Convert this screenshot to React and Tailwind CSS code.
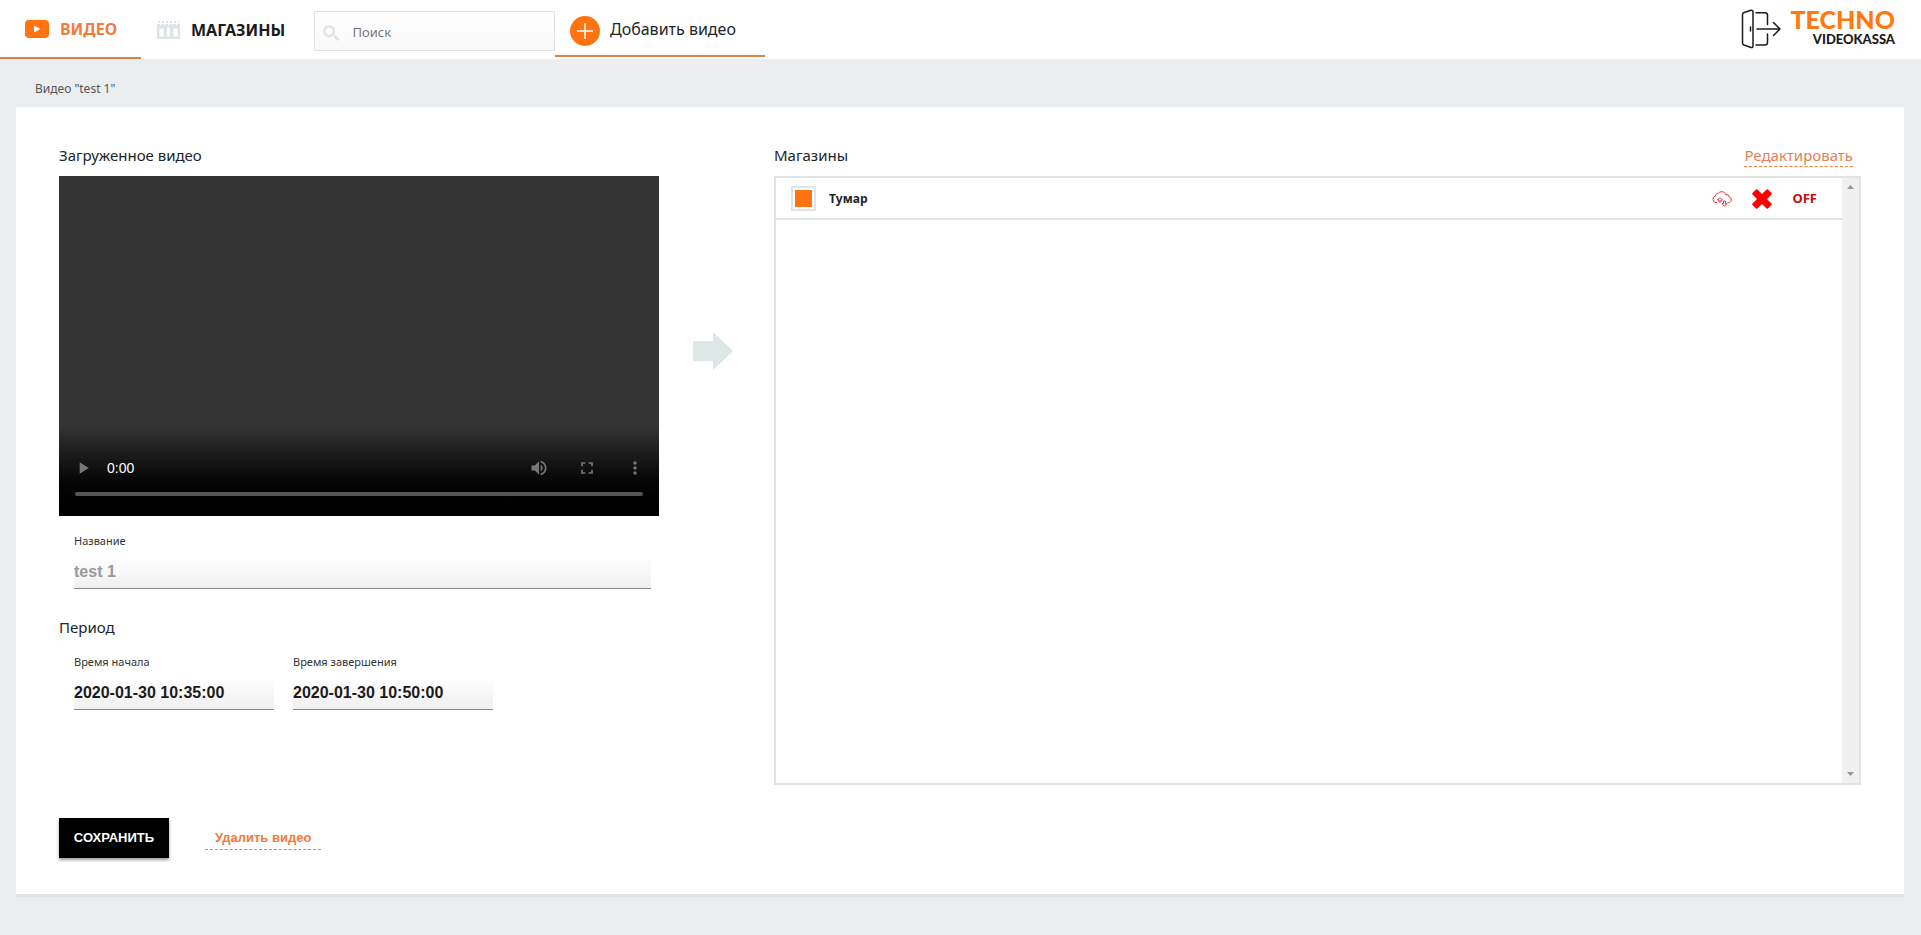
import { MdPlayArrow, MdVolumeUp, MdFullscreen, MdMoreVert } from "react-icons/md";

function ShopIcon() {
  return (
    <svg className="h-[18px] w-[23px]" viewBox="0 0 23 18" fill="none">
      <path d="M0 3h23v15H0z" fill="#dfe4e6" />
      <path d="M2.500 7.500H6.500V15.500H2.500zM10 7.500q0-1 1.500-1t1.500 1V15.500H10zM16.500 7.500H20.500V15.500H16.500z" fill="#fff" />
      <path d="M1 1h21" stroke="#dfe4e6" strokeWidth="2" strokeDasharray="2 2" />
      <path d="M3.500 2.500v2M7.500 2.500v2M11.500 2.500v2M15.500 2.500v2M19.500 2.500v2" stroke="#fff" />
    </svg>
  );
}

function ExitIcon() {
  return (
    <svg className="h-10 w-10" viewBox="0 0 40 40" fill="none" stroke="#1b1b1b" strokeWidth="1.5" strokeLinejoin="round" strokeLinecap="round">
      <path d="M3 3.500L10 1.300q2-.4 2 1.600V37q0 2-2 1.500L3 36q-1.500-.6-1.500-2V5.500Q1.500 4 3 3.500z" />
      <path d="M15 3.800H24q2.500 0 2.500 2.500V15.500M26.500 25V33.500q0 2.500-2.500 2.500H15M9.500 18v4M16 20H39M32.500 13.500L39 20l-6.500 6.500" />
    </svg>
  );
}

function CloudIcon() {
  return (
    <svg className="h-4 w-5" viewBox="0 0 20 16" fill="none" stroke="#e5343d" strokeLinejoin="round">
      <path d="M5 11.500H4A3.300 3.300 0 0 1 3.500 5C3.300 3 5 2.200 6.200 2.700C7.500-.2 13 0 13.800 3.800C15.500 3 17.200 4.300 17 6C20.300 6.800 20.200 11.200 16.500 11.500H15.500" />
      <path d="M5.500 9L8 6.500 10.500 9H9v2H7V9zM10 12.500L12.500 15.300 15 12.500H13.500v-2.500h-2v2.500z" />
    </svg>
  );
}

function Field({ id, label, value, disabled = false }) {
  return (
    <div>
      <label htmlFor={id} className="block text-[11px] leading-4 text-[#333]">{label}</label>
      <input
        id={id}
        defaultValue={value}
        disabled={disabled}
        className="mt-[11px] block h-[29px] w-full border-b border-[#888] bg-linear-to-b from-[#fdfdfd] to-[#f0f0f0] pb-1 font-['Liberation_Sans',sans-serif] text-base font-bold text-[#1b1b1b] outline-none disabled:text-[#999]"
      />
    </div>
  );
}

export default function App() {
  return (
    <div className="min-h-screen bg-[#ebedee] pb-10 font-['Noto_Sans',sans-serif] text-[#212529]">
      <header className="flex h-[59px] items-start bg-white">
        <nav className="flex items-start">
          <a href="#video" className="flex h-[59px] w-[141px] items-center gap-[11px] border-b-2 border-[#dd8050] pl-[25px] text-base font-bold text-[#f37b3c]">
            <svg className="h-[18px] w-6" viewBox="0 0 24 18">
              <rect width="24" height="18" rx="4" fill="#ff7310" />
              <path d="M9 5.500l6.500 3.500L9 12.500z" fill="#fff" />
            </svg>
            ВИДЕО
          </a>
          <a href="#shops" className="flex h-[59px] w-[173px] items-center gap-[11px] pl-4 text-base font-bold text-[#1b1b1b]">
            <ShopIcon />
            МАГАЗИНЫ
          </a>
        </nav>
        <label className="mt-[11px] flex h-10 w-[241px] items-center gap-3 border border-[#dee2e4] bg-linear-to-b from-white to-[#f8f8f8] pt-1 pl-2">
          <svg className="h-5 w-5" viewBox="0 0 20 20" fill="none" stroke="#dde2e4">
            <circle cx="7" cy="8" r="5.500" strokeWidth="2.500" />
            <path d="M13 13.500l5 4.500" strokeWidth="3" />
          </svg>
          <input type="search" aria-label="Поиск" placeholder="Поиск" className="w-full min-w-0 bg-transparent text-[13px] outline-none placeholder:text-[#777]" />
        </label>
        <button className="flex h-[57px] w-[210px] items-center gap-[10px] border-b-2 border-[#dd8050] pt-0.5 pl-[15px] text-base">
          <svg className="mt-1 size-[30px]" viewBox="0 0 30 30">
            <circle cx="15" cy="15" r="15" fill="#ff7310" />
            <path d="M15 7v16M7 15h16" stroke="#fff" strokeWidth="1.500" />
          </svg>
          Добавить видео
        </button>
        <div className="ml-auto flex items-start pt-1.5 pr-[26px]">
          <a href="#exit" aria-label="Выход" className="mt-[3px] mr-[9px]"><ExitIcon /></a>
          <a href="#home" className="flex flex-col items-end font-['Lato',sans-serif] font-black">
            <span className="text-[25px] leading-[26px] text-[#ff7a0c]">TECHNO</span>
            <span className="text-[13px] leading-[14px] text-[#1b1b1b]">VIDEOKASSA</span>
          </a>
        </div>
      </header>

      <p className="px-[35px] pt-5 pb-2 text-xs leading-5 text-[#555]">Видео "test 1"</p>

      <main className="mr-[17px] ml-4 flex flex-col bg-white px-[43px] pb-9 shadow-[0_3px_0_#dfe4e5]">
        <div className="flex pt-[37px]">
          <section className="w-[600px] shrink-0">
            <h2 className="text-[15px] leading-[22px]">Загруженное видео</h2>
            <div className="mt-[10px] flex h-[340px] flex-col justify-end bg-linear-to-b from-[#333] from-74% to-black pb-5">
              <div className="flex h-12 items-center pl-[14px] text-[#777]">
                <button aria-label="Воспроизвести" className="w-[34px]"><MdPlayArrow size={20} /></button>
                <span className="flex-1 font-['Liberation_Sans',sans-serif] text-sm text-white">0:00</span>
                <button aria-label="Звук" className="grid w-12 place-items-center"><MdVolumeUp size={20} /></button>
                <button aria-label="Во весь экран" className="grid w-12 place-items-center"><MdFullscreen size={20} /></button>
                <button aria-label="Ещё" className="grid w-12 place-items-center"><MdMoreVert size={20} /></button>
              </div>
              <div className="mx-4 h-1 rounded-sm bg-[#555]" />
            </div>
            <div className="mt-[17px] mr-2 ml-[15px]">
              <Field id="title" label="Название" value="test 1" disabled />
            </div>
            <h2 className="mt-[27px] text-[15px] leading-[22px]">Период</h2>
            <div className="mt-4 ml-[15px] grid grid-cols-[200px_200px] gap-[19px]">
              <Field id="start" label="Время начала" value="2020-01-30 10:35:00" />
              <Field id="end" label="Время завершения" value="2020-01-30 10:50:00" />
            </div>
          </section>

          <svg className="mx-[34px] mt-[188px] h-[38px] w-10 shrink-0" viewBox="0 0 40 38">
            <path d="M0 9h20V0l20 19-20 19v-9H0z" fill="#dfe6e6" />
          </svg>

          <section className="ml-[7px] min-w-0 flex-1">
            <div className="flex items-start justify-between pr-2">
              <h2 className="text-[15px] leading-[22px]">Магазины</h2>
              <a href="#edit" className="border-b border-dashed border-[#f37b3c] text-[15px] leading-[22px] text-[#e58055]">Редактировать</a>
            </div>
            <div className="mt-[9px] flex h-[609px] border-2 border-[#dfe4e5]">
              <div className="flex-1">
                <div className="flex h-[42px] items-center border-b-2 border-[#dfe4e5] pt-px pr-[25px] pl-[15px]">
                  <label className="flex flex-1 items-center gap-[13px] text-xs font-bold">
                    <input type="checkbox" defaultChecked className="size-[25px] appearance-none border-2 border-[#dfe4e5] bg-white p-0.5 checked:bg-[#ff7310] checked:bg-clip-content" />
                    Тумар
                  </label>
                  <button aria-label="Загрузка" className="mr-5"><CloudIcon /></button>
                  <button aria-label="Удалить" className="mr-5">
                    <svg className="size-5" viewBox="0 0 20 20" fill="#f00">
                      <path d="M4 .5q.7-.7 1.400 0L10 5l4.600-4.500q.7-.7 1.400 0l3.500 3.500q.7.7 0 1.400L15 10l4.500 4.600q.7.7 0 1.400L16 19.500q-.7.7-1.400 0L10 15l-4.600 4.500q-.7.7-1.400 0L.5 16q-.7-.7 0-1.400L5 10 .5 5.400q-.7-.7 0-1.400z" />
                    </svg>
                  </button>
                  <button className="text-[13px] font-bold text-[#c60c0c]">OFF</button>
                </div>
              </div>
              <div className="flex w-[17px] flex-col items-center justify-between bg-[#f0f0f0] py-[7px]">
                <svg className="h-1 w-[7px]" viewBox="0 0 7 4" fill="#999"><path d="M0 4l3.500-4L7 4z" /></svg>
                <svg className="h-1 w-[7px]" viewBox="0 0 7 4" fill="#999"><path d="M0 0l3.500 4L7 0z" /></svg>
              </div>
            </div>
          </section>
        </div>

        <div className="mt-[33px] flex items-center gap-9 font-['Liberation_Sans',sans-serif] font-bold">
          <button className="h-10 w-[110px] bg-black text-[13px] text-white shadow-[0_2px_3px_#0006]">СОХРАНИТЬ</button>
          <button className="border-b border-dashed border-[#f37b3c] px-[10px] text-[13px] leading-[22px] text-[#f37b3c]">Удалить видео</button>
        </div>
      </main>
    </div>
  );
}
